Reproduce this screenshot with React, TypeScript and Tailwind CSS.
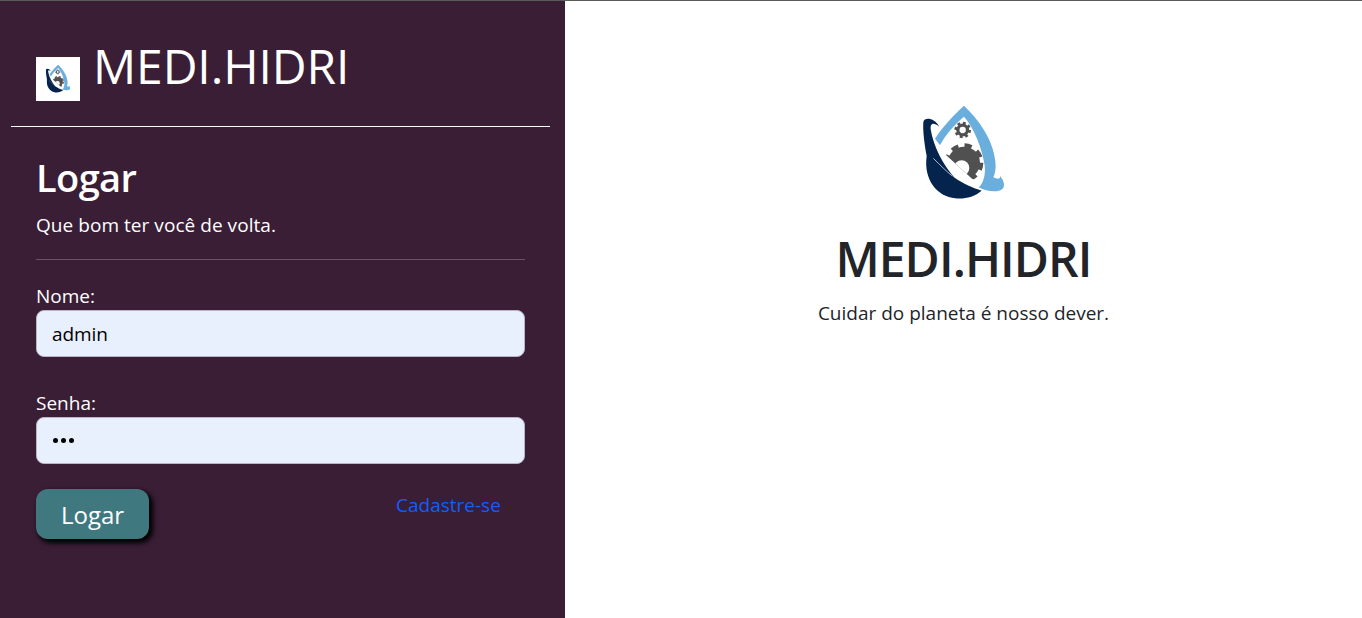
function Logo({ className, id }: { className: string; id: string }) {
  return (
    <svg viewBox="30 -30 441 441" className={className}>
      <defs>
        <clipPath id={id}>
          <polygon points="198,195 198,140 330,140 330,290 276,266" />
        </clipPath>
      </defs>
      <rect x="30" y="-30" width="441" height="441" fill="#ffffff" />
      <path
        d="M252 47 C296 88 340 150 346 214 C348 236 346 250 340 262 C352 268 362 268 360 258 C372 272 376 288 368 296 C352 310 320 304 296 292 C308 284 318 256 314 226 C306 176 282 112 252 80 C224 104 196 134 180 166 L165 146 C186 112 220 76 252 47 Z"
        fill="#6aaede"
      />
      <path
        d="M130 96 C134 80 164 84 178 110 C160 96 150 100 152 118 C160 170 190 225 222 262 C250 282 280 295 305 302 C284 320 254 328 226 325 C172 320 130 270 140 198 C134 165 128 125 130 96 Z"
        fill="#04244d"
      />
      <path d="M160 205 C180 225 200 245 217 258" fill="none" stroke="#ffffff" strokeWidth="2" />
      <g clipPath={`url(#${id})`}>
        <circle cx="252" cy="218" r="48" fill="#505050" />
        <circle cx="252" cy="218" r="52" fill="none" stroke="#505050" strokeWidth="12" strokeDasharray="22 18.84" />
        <circle cx="245" cy="234" r="23" fill="#ffffff" />
      </g>
      <circle cx="248" cy="120" r="14.5" fill="none" stroke="#505050" strokeWidth="10" />
      <circle cx="248" cy="120" r="21" fill="none" stroke="#505050" strokeWidth="8" strokeDasharray="8.5 8" />
    </svg>
  );
}

export default function App() {
  return (
    <div className="flex h-[618px] overflow-hidden border-t border-[#5a5a5a] bg-white font-['Open_Sans','Noto_Sans',sans-serif]">
      <aside className="w-[565px] shrink-0 bg-[#3a1e36] text-white">
        <header className="ml-[11px] flex h-[126px] w-[539px] items-start border-b border-white pl-[25px]">
          <Logo id="gear-small" className="mt-[56px] h-[44px] w-[44px]" />
          <h1 className="ml-[13px] mt-[30px] text-[48px] leading-[70px] font-normal tracking-[-0.1px]">MEDI.HIDRI</h1>
        </header>
        <section className="px-[36px]">
          <h2 className="mt-[25px] text-[38px] leading-[50px] font-semibold tracking-[-0.6px]">Logar</h2>
          <p className="mt-[10px] text-[19px] leading-[27px] tracking-[0.05px]">Que bom ter você de volta.</p>
          <hr className="mt-[20px] w-[489px] border-t border-[#6a5267]" />
          <form>
            <label className="mt-[24px] block text-[19px] leading-[24px]">Nome:</label>
            <div className="mt-[2px] flex h-[47px] w-[489px] items-center rounded-[8px] border border-[#b9b3c4] bg-[#e8f0fe] pl-[15px] pt-[2px] text-[19px] tracking-[-0.1px] text-black">admin</div>
            <label className="mt-[34px] block text-[19px] leading-[24px]">Senha:</label>
            <div className="mt-[2px] flex h-[47px] w-[489px] items-center gap-[3px] rounded-[8px] border border-[#b9b3c4] bg-[#e8f0fe] pl-[16px]">
              <span className="h-[5px] w-[5px] rounded-full bg-black" />
              <span className="h-[5px] w-[5px] rounded-full bg-black" />
              <span className="h-[5px] w-[5px] rounded-full bg-black" />
            </div>
            <div className="mt-[25px] flex items-start">
              <button type="button" className="h-[50px] w-[113px] rounded-[12px] bg-[#3f797f] pt-[2px] text-[24px] text-white shadow-[3px_3px_5px_1px_#000000]">Logar</button>
              <a className="ml-[247px] mt-[3px] text-[19px] leading-[27px] text-[#0d5efd]">Cadastre-se</a>
            </div>
          </form>
        </section>
      </aside>
      <main className="flex-1 text-[#212529]">
        <div className="flex flex-col items-center">
          <Logo id="gear-large" className="mt-[79px] h-[147px] w-[147px] blur-[0.5px]" />
          <h2 className="-mt-[3px] text-[48px] leading-[70px] font-semibold tracking-[-0.9px]">MEDI.HIDRI</h2>
          <p className="mt-[6px] text-[19px] leading-[27px]">Cuidar do planeta é nosso dever.</p>
        </div>
      </main>
    </div>
  );
}
